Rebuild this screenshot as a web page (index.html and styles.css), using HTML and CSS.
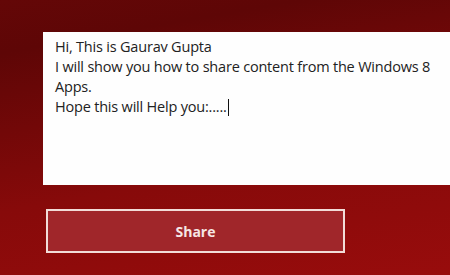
FILE: index.html
```html
<!DOCTYPE html>
<html lang="en">
<head>
    <meta charset="UTF-8">
    <title>Share</title>
    <link rel="stylesheet" href="styles.css">
</head>
<body>
    <div class="page">
        <div class="message-box">
            <div class="line">Hi, This is Gaurav Gupta</div>
            <div class="line">I will show you how to share content from the Windows 8</div>
            <div class="line">Apps.</div>
            <div class="line">Hope this will Help you:.....<span class="caret"></span></div>
        </div>
        <button class="share-btn">Share</button>
    </div>
</body>
</html>
```

FILE: styles.css
```css
html, body {
    margin: 0;
    height: 100%;
}
body {
    font-family: 'Open Sans', 'Noto Sans', sans-serif;
    background: linear-gradient(170deg, #640707 0%, #5e0606 15%, #870a0a 60%, #980c0c 100%);
    overflow: hidden;
}
.page {
    padding: 32px 0 0 43px;
}
.message-box {
    background-color: #fefefe;
    height: 153px;
    box-sizing: border-box;
    padding: 5px 0 0 12px;
    color: #222;
    font-size: 14.5px;
    line-height: 20px;
    letter-spacing: -0.2px;
}
.caret {
    display: inline-block;
    width: 1px;
    height: 17px;
    background-color: #111;
    vertical-align: -4px;
    margin-left: 1px;
}
.share-btn {
    display: block;
    margin: 24px 0 0 3px;
    width: 299px;
    height: 44px;
    background-color: #a0262a;
    border: 2px solid #f2dcd8;
    color: #f6e6e4;
    font-family: 'Open Sans', 'Noto Sans', sans-serif;
    font-weight: bold;
    font-size: 14px;
    cursor: pointer;
}
```
